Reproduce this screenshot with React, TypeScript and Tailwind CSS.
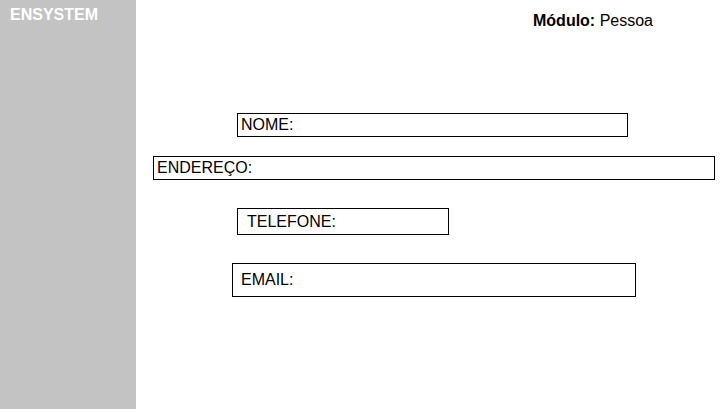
export default function App() {
    return (
        <div className="flex h-[409px] w-[725px] bg-white font-['Liberation_Sans',Arial,sans-serif] text-base text-black">
            <aside className="w-[136px] shrink-0 bg-[#c3c3c3] pl-[10px] pt-[3px]">
                <span className="text-base font-bold text-white">ENSYSTEM</span>
            </aside>

            <main className="flex flex-1 flex-col items-start">
                <div className="pl-[397px] pt-[12px] leading-[18px]">
                    <b>Módulo:</b> Pessoa
                </div>

                <div className="ml-[101px] mt-[83px] flex h-[24px] w-[391px] items-center border border-black pl-[3px]">
                    NOME:
                </div>
                <div className="ml-[17px] mt-[19px] flex h-[24px] w-[562px] items-center border border-black pl-[3px]">
                    ENDEREÇO:
                </div>
                <div className="ml-[101px] mt-[28px] flex h-[27px] w-[212px] items-center border border-black pl-[9px]">
                    TELEFONE:
                </div>
                <div className="ml-[96px] mt-[28px] flex h-[34px] w-[404px] items-center border border-black pl-[8px]">
                    EMAIL:
                </div>
            </main>
        </div>
    );
}
